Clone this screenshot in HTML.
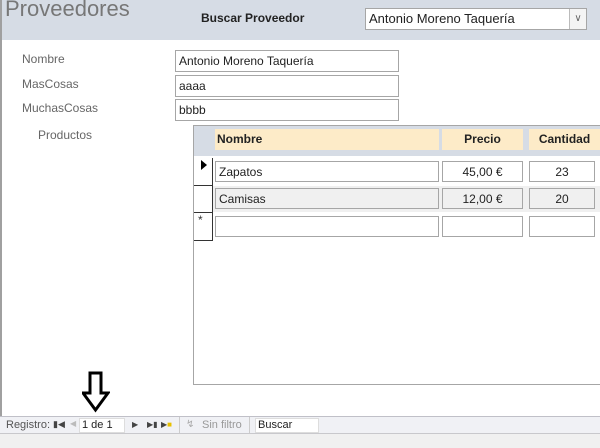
<!DOCTYPE html>
<html><head><meta charset="utf-8"><style>
*{box-sizing:border-box;margin:0;padding:0}
body{width:600px;height:448px;overflow:hidden;background:#fff;font-family:"Liberation Sans",sans-serif;font-size:12px;color:#222;position:relative}
.a{position:absolute}
.box{position:absolute;border:1px solid #a6a6a6;background:#fff;padding:2px 3px;font-size:12px;height:22px;line-height:16px}
.lbl{position:absolute;color:#666;font-size:12px}
</style></head><body>
<div class="a" style="left:0;top:0;width:600px;height:40px;background:#d6dce5"></div>
<div class="a" style="left:0;top:0;width:2px;height:416px;background:#a0a0a0"></div>
<div class="a" style="left:5px;top:-4px;font-size:22px;color:#777">Proveedores</div>
<div class="a" style="left:201px;top:11px;font-weight:bold;font-size:12px">Buscar Proveedor</div>
<div class="box" style="left:365px;top:8px;width:222px;height:22px;font-size:13px">Antonio Moreno Taquería</div>
<div class="a" style="left:569px;top:9px;width:17px;height:20px;border-left:1px solid #bbb;background:#f4f4f4;font-size:10px;text-align:center;line-height:20px;color:#666">&#8744;</div>
<div class="lbl" style="left:22px;top:52px">Nombre</div>
<div class="lbl" style="left:22px;top:77px">MasCosas</div>
<div class="lbl" style="left:22px;top:101px">MuchasCosas</div>
<div class="lbl" style="left:38px;top:128px">Productos</div>
<div class="box" style="left:175px;top:50px;width:224px">Antonio Moreno Taquería</div>
<div class="box" style="left:175px;top:75px;width:224px">aaaa</div>
<div class="box" style="left:175px;top:99px;width:224px">bbbb</div>
<div class="a" style="left:193px;top:125px;width:410px;height:260px;border:1px solid #a6a6a6;background:#fff"></div>
<div class="a" style="left:194px;top:126px;width:406px;height:30px;background:#d6dce5"></div>
<div class="a" style="left:215px;top:129px;width:224px;height:21px;background:#fdebc8;font-weight:bold;padding:3px 2px">Nombre</div>
<div class="a" style="left:442px;top:129px;width:81px;height:21px;background:#fdebc8;font-weight:bold;text-align:center;padding-top:3px">Precio</div>
<div class="a" style="left:529px;top:129px;width:71px;height:21px;background:#fdebc8;font-weight:bold;text-align:center;padding-top:3px">Cantidad</div>
<div class="a" style="left:213px;top:186px;width:387px;height:26px;background:#f0f0f0"></div>
<div class="a" style="left:194px;top:158px;width:19px;height:82px;border-right:1px solid #333"></div>
<div class="a" style="left:194px;top:185px;width:19px;height:1px;background:#333"></div>
<div class="a" style="left:194px;top:212px;width:19px;height:1px;background:#333"></div>
<div class="a" style="left:194px;top:240px;width:19px;height:1px;background:#333"></div>
<div class="a" style="left:201px;top:160px;width:0;height:0;border-left:6px solid #000;border-top:5px solid transparent;border-bottom:5px solid transparent"></div>
<div class="a" style="left:198px;top:213px;font-size:12px;color:#333">*</div>
<div class="box" style="left:215px;top:161px;width:224px;height:21px;font-size:12px">Zapatos</div>
<div class="box" style="left:442px;top:161px;width:81px;height:21px;text-align:center">45,00 €</div>
<div class="box" style="left:529px;top:161px;width:66px;height:21px;text-align:center">23</div>
<div class="box" style="left:215px;top:188px;width:224px;height:21px;background:#f0f0f0">Camisas</div>
<div class="box" style="left:442px;top:188px;width:81px;height:21px;text-align:center;background:#f0f0f0">12,00 €</div>
<div class="box" style="left:529px;top:188px;width:66px;height:21px;text-align:center;background:#f0f0f0">20</div>
<div class="box" style="left:215px;top:216px;width:224px;height:21px"></div>
<div class="box" style="left:442px;top:216px;width:81px;height:21px"></div>
<div class="box" style="left:529px;top:216px;width:66px;height:21px"></div>
<svg class="a" style="left:82px;top:371px" width="28" height="42" viewBox="0 0 28 42"><path d="M8 2H19V22H26L13.5 39L1 22H8Z" fill="#fff" stroke="#000" stroke-width="3" stroke-linejoin="miter"/></svg>
<div class="a" style="left:0;top:416px;width:600px;height:18px;background:#f0f1f5;border-top:1px solid #c0c0c8;border-bottom:1px solid #c8c8cc"></div>
<div class="a" style="left:0;top:434px;width:600px;height:14px;background:#f0f0f0"></div>
<div class="a" style="left:6px;top:419px;font-size:11px;color:#555">Registro:</div>
<div class="a" style="left:53px;top:419px;font-size:9px;color:#444">&#9646;&#9664;</div>
<div class="a" style="left:70px;top:419px;font-size:8px;color:#bbb">&#9664;</div>
<div class="a" style="left:79px;top:418px;width:46px;height:15px;background:#fff;border:1px solid #ddd;font-size:11px;padding-left:2px;line-height:13px">1 de 1</div>
<div class="a" style="left:132px;top:420px;font-size:8px;color:#444">&#9654;</div>
<div class="a" style="left:147px;top:420px;font-size:8px;color:#444">&#9654;&#9646;</div>
<div class="a" style="left:161px;top:420px;font-size:8px;color:#444">&#9654;<span style="color:#e8c000">&#9632;</span></div>
<div class="a" style="left:179px;top:417px;width:1px;height:16px;background:#ccc"></div>
<div class="a" style="left:186px;top:419px;font-size:10px;color:#aaa">&#8623;</div>
<div class="a" style="left:202px;top:419px;font-size:11px;color:#999">Sin filtro</div>
<div class="a" style="left:249px;top:417px;width:1px;height:16px;background:#ccc"></div>
<div class="a" style="left:255px;top:418px;width:64px;height:15px;background:#fff;border:1px solid #ddd;font-size:11px;padding-left:2px;line-height:13px">Buscar</div>
</body></html>
